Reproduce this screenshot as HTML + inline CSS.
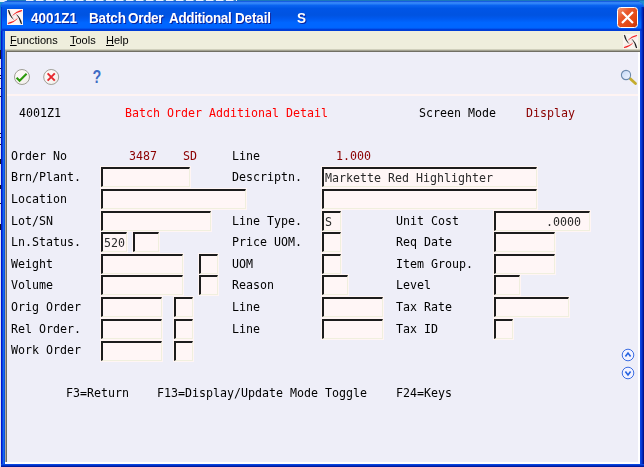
<!DOCTYPE html>
<html><head><meta charset="utf-8">
<title>4001Z1 Batch Order Additional Detail</title>
<style>
html,body{margin:0;padding:0;}
body{width:644px;height:467px;overflow:hidden;position:relative;background:#0a46e0;font-family:"Liberation Sans",sans-serif;}
.abs{position:absolute;}
#desk{left:0;top:0;width:644px;height:12px;background:#1d90d0;}
#desk i{position:absolute;left:0;top:0;width:644px;height:1px;background:#1a78bc;}
#desk b{position:absolute;left:26px;top:0;width:211px;height:1px;background:repeating-linear-gradient(90deg,rgba(255,255,255,.92) 0,rgba(255,255,255,.92) 7px,rgba(255,255,255,.1) 8px,rgba(255,255,255,.1) 10px);}
#desk u{position:absolute;left:0;top:0;width:7px;height:2px;background:#e8f2fa;border-radius:0 0 4px 0;}
#win{left:0;top:1px;width:644px;height:466px;border-radius:8px 8px 0 0;background:#0a46e0;overflow:hidden;}
#title{left:0;top:0;width:644px;height:30px;background:linear-gradient(180deg,#0a4ad8 0%,#3d8ffb 6%,#2a80f8 9%,#0a63f0 15%,#0055e6 25%,#0053e1 47%,#005af0 60%,#0066ff 72%,#0066ff 88%,#0055ee 92%,#003dd7 95%,#003dd7 100%);}
#title span{will-change:transform;position:absolute;top:9.6px;color:#fff;font-weight:bold;font-size:13.5px;line-height:16px;white-space:pre;text-shadow:1px 1px 0 #0a1f9a;letter-spacing:-0.15px;transform:scaleY(1.07);transform-origin:0 12.5px;}
#bl{left:0;top:30px;width:5px;height:436px;background:linear-gradient(90deg,#dfe3f3 0,#dfe3f3 1px,#0019cf 1px,#0019cf 2px,#0a40e0 2px,#0a40e0 3px,#166aee 3px,#166aee 4px,#0a52e2 4px);}
#bl i{position:absolute;left:0;width:1px;background:#15151c;}
#br{left:640px;top:30px;width:4px;height:436px;background:linear-gradient(90deg,#0a46e0 0,#0a46e0 1px,#0839d4 1px,#0839d4 2px,#0026b8 2px,#0026b8 3px,#00138c 3px);}
#bb{left:1px;top:463px;width:643px;height:3px;background:linear-gradient(180deg,#0a46e0 0,#0a46e0 1px,#0030c4 1px,#0030c4 2px,#001a9c 2px);}
#menu{left:5px;top:30px;width:635px;height:18px;background:#efeedd;font-size:11px;}
#menu span{will-change:transform;position:absolute;top:3px;color:#000;white-space:pre;}
#menu u{text-decoration:underline;}
#sunk{left:5px;top:48px;width:635px;height:415px;background:#fff;box-sizing:border-box;border-top:3px solid #716f64;border-left:2px solid #716f64;}
#sunk:before{content:"";position:absolute;left:-2px;top:-3px;width:635px;height:1px;background:#d0cfbc;}
#sunk:after{content:"";position:absolute;left:-2px;top:-2px;width:1px;height:414px;background:#aca899;}
#sunk i{position:absolute;left:-2px;top:-2px;width:635px;height:1px;background:#a3a292;}
#client{left:7px;top:51px;width:631px;height:410px;background:#eeeef8;}
#pink{left:7px;top:93px;width:631px;height:2px;background:#fff4f3;}
.m{will-change:transform;position:absolute;font-family:"DejaVu Sans Mono","Liberation Mono",monospace;font-size:11.63px;line-height:14px;white-space:pre;color:#000;}
.in{position:absolute;box-sizing:border-box;height:20px;background:#fff6f6;border-top:2px solid #1c1c1c;border-left:2px solid #1c1c1c;border-right:1px solid #f0efde;border-bottom:1px solid #f0efde;outline:1px solid #fff5f4;}
.in .v{position:absolute;left:1.5px;right:2px;top:2.5px;font-family:"DejaVu Sans Mono","Liberation Mono",monospace;font-size:11.63px;line-height:14px;white-space:pre;color:#2c2c2c;}
svg{position:absolute;overflow:visible;}
</style></head><body>
<div id="desk" class="abs"><i></i><b></b><u></u></div>
<div id="win" class="abs">
<div id="title" class="abs"><span style="left:30.5px;letter-spacing:0.05px">4001Z1</span><span style="left:88.8px">Batch</span><span style="left:128.2px;letter-spacing:-0.3px">Order</span><span style="left:168.7px;letter-spacing:-0.36px">Additional</span><span style="left:235px">Detail</span><span style="left:297.3px">S</span></div>
<div class="abs" style="left:0;top:0;width:1px;height:30px;background:#1a86c8"></div><div class="abs" style="left:1px;top:6px;width:1px;height:24px;background:#0a2fd4"></div><div class="abs" style="left:641px;top:6px;width:3px;height:24px;background:linear-gradient(90deg,rgba(0,40,190,0.5) 0,rgba(0,40,190,0.5) 1px,#0026b8 1px,#0026b8 2px,#00138c 2px)"></div><div id="bl" class="abs"><i style="top:0;height:19px;background:#1a7cc0"></i><i style="top:19px;height:9px"></i><i style="top:37px;height:1px"></i><i style="top:44px;height:1px"></i><i style="top:47px;height:1px"></i><i style="top:57px;height:1px"></i><i style="top:65px;height:1px"></i><i style="top:102px;height:1px"></i><i style="top:106px;height:1px"></i><i style="top:113px;height:1px"></i><i style="top:128px;height:5px"></i><i style="top:154px;height:4px"></i><i style="top:172px;height:1px"></i><i style="top:193px;height:6px"></i></div><div id="br" class="abs"></div><div id="bb" class="abs"></div>
<div id="menu" class="abs"><span style="left:5px"><u>F</u>unctions</span><span style="left:65px"><u>T</u>ools</span><span style="left:101px"><u>H</u>elp</span></div>
<div id="sunk" class="abs"><i></i></div>
<div id="client" class="abs"></div>
<div id="pink" class="abs"></div><div class="abs" style="left:5px;top:461px;width:635px;height:2px;background:#fff"></div>
</div>
<svg style="left:7px;top:9px" width="16" height="16" viewBox="0 0 16 16"><rect width="16" height="16" fill="#fdf6f4"/><path transform="rotate(0 8 8)" d="M1,1 Q2,7 6.8,10.9 Q3.4,6.8 2.2,1.2 Z" fill="#151515" stroke="#151515" stroke-width="0.15"/><path transform="rotate(0 8 8)" d="M2.2,1.2 Q7,3 6.8,10.9" fill="none" stroke="#e6dcdc" stroke-width="0.5"/><path transform="rotate(90 8 8)" d="M1,1 Q2,7 6.8,10.9 Q3.4,6.8 2.2,1.2 Z" fill="#f21a1a" stroke="#f21a1a" stroke-width="0.15"/><path transform="rotate(90 8 8)" d="M2.2,1.2 Q7,3 6.8,10.9" fill="none" stroke="#f8d0d0" stroke-width="0.5"/><path transform="rotate(180 8 8)" d="M1,1 Q2,7 6.8,10.9 Q3.4,6.8 2.2,1.2 Z" fill="#151515" stroke="#151515" stroke-width="0.15"/><path transform="rotate(180 8 8)" d="M2.2,1.2 Q7,3 6.8,10.9" fill="none" stroke="#e6dcdc" stroke-width="0.5"/><path transform="rotate(270 8 8)" d="M1,1 Q2,7 6.8,10.9 Q3.4,6.8 2.2,1.2 Z" fill="#f21a1a" stroke="#f21a1a" stroke-width="0.15"/><path transform="rotate(270 8 8)" d="M2.2,1.2 Q7,3 6.8,10.9" fill="none" stroke="#f8d0d0" stroke-width="0.5"/></svg>
<svg style="left:623px;top:33.5px" width="15" height="15" viewBox="0 0 16 16"><rect width="16" height="16" fill="#faf7f0"/><path transform="rotate(0 8 8)" d="M1,1 Q2,7 6.8,10.9 Q3.4,6.8 2.2,1.2 Z" fill="#151515" stroke="#151515" stroke-width="0.15"/><path transform="rotate(0 8 8)" d="M2.2,1.2 Q7,3 6.8,10.9" fill="none" stroke="#e6dcdc" stroke-width="0.5"/><path transform="rotate(90 8 8)" d="M1,1 Q2,7 6.8,10.9 Q3.4,6.8 2.2,1.2 Z" fill="#f21a1a" stroke="#f21a1a" stroke-width="0.15"/><path transform="rotate(90 8 8)" d="M2.2,1.2 Q7,3 6.8,10.9" fill="none" stroke="#f8d0d0" stroke-width="0.5"/><path transform="rotate(180 8 8)" d="M1,1 Q2,7 6.8,10.9 Q3.4,6.8 2.2,1.2 Z" fill="#151515" stroke="#151515" stroke-width="0.15"/><path transform="rotate(180 8 8)" d="M2.2,1.2 Q7,3 6.8,10.9" fill="none" stroke="#e6dcdc" stroke-width="0.5"/><path transform="rotate(270 8 8)" d="M1,1 Q2,7 6.8,10.9 Q3.4,6.8 2.2,1.2 Z" fill="#f21a1a" stroke="#f21a1a" stroke-width="0.15"/><path transform="rotate(270 8 8)" d="M2.2,1.2 Q7,3 6.8,10.9" fill="none" stroke="#f8d0d0" stroke-width="0.5"/></svg>
<svg style="left:617px;top:7px" width="21" height="21" viewBox="0 0 21 21"><defs><linearGradient id="cg" x1="0" y1="0" x2="1" y2="1"><stop offset="0" stop-color="#f59a78"/><stop offset="0.35" stop-color="#e8582c"/><stop offset="0.75" stop-color="#e0450f"/><stop offset="1" stop-color="#b8300a"/></linearGradient></defs>
<rect x="0.5" y="0.5" width="20" height="20" rx="3" fill="url(#cg)" stroke="#fff" stroke-width="1"/>
<path d="M5.8,5.8 L15.2,15.2 M15.2,5.8 L5.8,15.2" stroke="#fff" stroke-width="2.2" stroke-linecap="square"/></svg>
<svg style="left:14px;top:69px" width="16" height="16" viewBox="0 0 16 16"><defs><linearGradient id="bg1" x1="0" y1="0" x2="1" y2="1"><stop offset="0" stop-color="#fffafa"/><stop offset="0.6" stop-color="#f8f4f2"/><stop offset="1" stop-color="#ecece6"/></linearGradient></defs>
<circle cx="8" cy="8" r="7.5" fill="url(#bg1)" stroke="#94948a" stroke-width="0.9"/>
<path d="M2.6,8.8 L5.6,11.8 L12.6,4.8" fill="none" stroke="#2b9a0c" stroke-width="2.1"/></svg>
<svg style="left:43px;top:69px" width="16" height="16" viewBox="0 0 16 16">
<circle cx="8.2" cy="8" r="7.5" fill="url(#bg1)" stroke="#94948a" stroke-width="0.9"/>
<path d="M4.6,4.4 L11.8,11.6 M11.8,4.4 L4.6,11.6" fill="none" stroke="#e6282e" stroke-width="2"/></svg>
<div class="abs" style="left:90.7px;top:67px;width:12px;height:20px;color:#3f6cc4;font-weight:bold;font-size:18px;line-height:20px;text-align:center;transform:scaleX(0.8);text-shadow:0 0 1px #fff">?</div>
<svg style="left:619px;top:68px" width="20" height="20" viewBox="0 0 20 20"><defs><linearGradient id="lg" x1="0" y1="0" x2="1" y2="1"><stop offset="0" stop-color="#c4d8f6"/><stop offset="1" stop-color="#f2f6ff"/></linearGradient></defs>
<path d="M11,10.5 L16.5,15.5" stroke="#c4ac2e" stroke-width="2.8" stroke-linecap="round"/>
<circle cx="7" cy="7" r="4.6" fill="url(#lg)" stroke="#6c8aac" stroke-width="1.1"/></svg>
<svg style="left:621px;top:348px" width="14" height="14" viewBox="0 0 14 14"><circle cx="7" cy="7" r="5.8" fill="#f2f2ff" stroke="#3c6ee2" stroke-width="1"/><path d="M4.4,8.4 L7,5 L9.6,8.4" fill="none" stroke="#2462e0" stroke-width="1.6"/></svg>
<svg style="left:621px;top:366px" width="14" height="14" viewBox="0 0 14 14"><circle cx="7" cy="7" r="5.8" fill="#f2f2ff" stroke="#3c6ee2" stroke-width="1"/><path d="M4.4,5.6 L7,9 L9.6,5.6" fill="none" stroke="#2462e0" stroke-width="1.6"/></svg>

<div class="m" style="left:19.10px;top:106.00px;color:#000">4001Z1</div>
<div class="m" style="left:124.60px;top:106.00px;color:#ff0000">Batch Order Additional Detail</div>
<div class="m" style="left:419.40px;top:106.00px;color:#000">Screen Mode</div>
<div class="m" style="left:525.90px;top:106.00px;color:#8b0000">Display</div>
<div class="m" style="left:10.85px;top:149.00px;color:#000">Order No</div>
<div class="m" style="left:10.85px;top:170.00px;color:#000">Brn/Plant.</div>
<div class="m" style="left:10.85px;top:192.00px;color:#000">Location</div>
<div class="m" style="left:10.85px;top:214.00px;color:#000">Lot/SN</div>
<div class="m" style="left:10.85px;top:235.00px;color:#000">Ln.Status.</div>
<div class="m" style="left:10.85px;top:257.00px;color:#000">Weight</div>
<div class="m" style="left:10.85px;top:278.00px;color:#000">Volume</div>
<div class="m" style="left:10.85px;top:300.00px;color:#000">Orig Order</div>
<div class="m" style="left:10.85px;top:322.00px;color:#000">Rel Order.</div>
<div class="m" style="left:10.85px;top:343.00px;color:#000">Work Order</div>
<div class="m" style="left:231.80px;top:149.00px;color:#000">Line</div>
<div class="m" style="left:231.80px;top:170.00px;color:#000">Descriptn.</div>
<div class="m" style="left:231.80px;top:214.00px;color:#000">Line Type.</div>
<div class="m" style="left:231.80px;top:235.00px;color:#000">Price UOM.</div>
<div class="m" style="left:231.80px;top:257.00px;color:#000">UOM</div>
<div class="m" style="left:231.80px;top:278.00px;color:#000">Reason</div>
<div class="m" style="left:231.80px;top:300.00px;color:#000">Line</div>
<div class="m" style="left:231.80px;top:322.00px;color:#000">Line</div>
<div class="m" style="left:395.80px;top:214.00px;color:#000">Unit Cost</div>
<div class="m" style="left:395.80px;top:235.00px;color:#000">Req Date</div>
<div class="m" style="left:395.80px;top:257.00px;color:#000">Item Group.</div>
<div class="m" style="left:395.80px;top:278.00px;color:#000">Level</div>
<div class="m" style="left:395.80px;top:300.00px;color:#000">Tax Rate</div>
<div class="m" style="left:395.80px;top:322.00px;color:#000">Tax ID</div>
<div class="m" style="left:128.70px;top:149.00px;color:#8b0000">3487</div>
<div class="m" style="left:182.70px;top:149.00px;color:#8b0000">SD</div>
<div class="m" style="left:335.60px;top:149.00px;color:#8b0000">1.000</div>
<div class="in" style="left:101px;top:167px;width:89px"></div>
<div class="in" style="left:101px;top:189px;width:145px"></div>
<div class="in" style="left:101px;top:211px;width:110px"></div>
<div class="in" style="left:101px;top:232px;width:26px"></div>
<div class="m" style="left:104.10px;top:236.00px;color:#2a2a2a">520</div>
<div class="in" style="left:133px;top:232px;width:26px"></div>
<div class="in" style="left:101px;top:254px;width:82px"></div>
<div class="in" style="left:199px;top:254px;width:19px"></div>
<div class="in" style="left:101px;top:275px;width:82px"></div>
<div class="in" style="left:199px;top:275px;width:19px"></div>
<div class="in" style="left:101px;top:297px;width:61px"></div>
<div class="in" style="left:174px;top:297px;width:19px"></div>
<div class="in" style="left:101px;top:319px;width:61px"></div>
<div class="in" style="left:174px;top:319px;width:19px"></div>
<div class="in" style="left:101px;top:341px;width:61px"></div>
<div class="in" style="left:174px;top:341px;width:19px"></div>
<div class="in" style="left:322px;top:167px;width:215px"></div>
<div class="m" style="left:325.10px;top:171.00px;color:#2a2a2a">Markette Red Highlighter</div>
<div class="in" style="left:322px;top:189px;width:215px"></div>
<div class="in" style="left:322px;top:211px;width:19px"></div>
<div class="m" style="left:325.10px;top:215.00px;color:#2a2a2a">S</div>
<div class="in" style="left:322px;top:232px;width:19px"></div>
<div class="in" style="left:322px;top:254px;width:19px"></div>
<div class="in" style="left:322px;top:275px;width:26px"></div>
<div class="in" style="left:322px;top:297px;width:61px"></div>
<div class="in" style="left:322px;top:319px;width:61px"></div>
<div class="in" style="left:494px;top:211px;width:96px"></div>
<div class="m" style="left:497.10px;top:215.00px;color:#2a2a2a">       .0000</div>
<div class="in" style="left:494px;top:232px;width:61px"></div>
<div class="in" style="left:494px;top:254px;width:61px"></div>
<div class="in" style="left:494px;top:275px;width:26px"></div>
<div class="in" style="left:494px;top:297px;width:75px"></div>
<div class="in" style="left:494px;top:319px;width:19px"></div>
<div class="m" style="left:66.40px;top:386.00px;color:#000">F3=Return</div>
<div class="m" style="left:157.40px;top:386.00px;color:#000">F13=Display/Update Mode Toggle</div>
<div class="m" style="left:395.70px;top:386.00px;color:#000">F24=Keys</div>
</body></html>
